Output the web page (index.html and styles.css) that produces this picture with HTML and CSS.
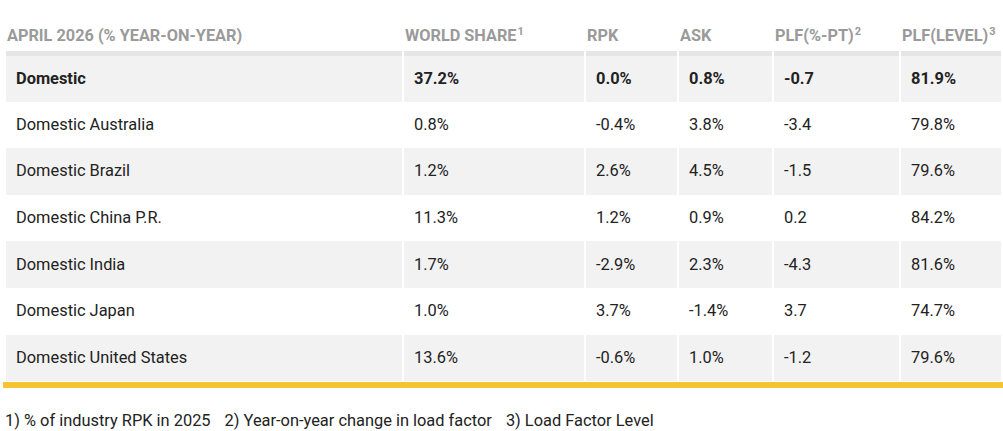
FILE: index.html
```html
<!DOCTYPE html>
<html lang="en">
<head>
<meta charset="utf-8">
<title>April 2026 domestic markets</title>
<link rel="stylesheet" href="styles.css">
</head>
<body>
<div class="panel">
  <table class="stats">
    <colgroup>
      <col class="c1"><col class="c2"><col class="c3"><col class="c4"><col class="c5"><col class="c6">
    </colgroup>
    <thead>
      <tr>
        <th>April 2026 (% year-on-year)</th>
        <th>World share<sup>1</sup></th>
        <th>RPK</th>
        <th>ASK</th>
        <th>PLF(%-pt)<sup>2</sup></th>
        <th>PLF(level)<sup>3</sup></th>
      </tr>
    </thead>
    <tbody>
      <tr class="total shade"><td>Domestic</td><td>37.2%</td><td>0.0%</td><td>0.8%</td><td>-0.7</td><td>81.9%</td></tr>
      <tr><td>Domestic Australia</td><td>0.8%</td><td>-0.4%</td><td>3.8%</td><td>-3.4</td><td>79.8%</td></tr>
      <tr class="shade"><td>Domestic Brazil</td><td>1.2%</td><td>2.6%</td><td>4.5%</td><td>-1.5</td><td>79.6%</td></tr>
      <tr><td>Domestic China P.R.</td><td>11.3%</td><td>1.2%</td><td>0.9%</td><td>0.2</td><td>84.2%</td></tr>
      <tr class="shade"><td>Domestic India</td><td>1.7%</td><td>-2.9%</td><td>2.3%</td><td>-4.3</td><td>81.6%</td></tr>
      <tr><td>Domestic Japan</td><td>1.0%</td><td>3.7%</td><td>-1.4%</td><td>3.7</td><td>74.7%</td></tr>
      <tr class="shade"><td>Domestic United States</td><td>13.6%</td><td>-0.6%</td><td>1.0%</td><td>-1.2</td><td>79.6%</td></tr>
    </tbody>
  </table>
  <div class="rule"></div>
</div>
<p class="notes">
  <span>1) % of industry RPK in 2025</span>
  <span>2) Year-on-year change in load factor</span>
  <span>3) Load Factor Level</span>
</p>
</body>
</html>
```
FILE: styles.css
```css
html, body {
  margin: 0;
  padding: 0;
  background: #ffffff;
}
body {
  font-family: Roboto, "Liberation Sans", Arial, sans-serif;
  color: #222222;
  width: 1003px;
}
.panel {
  margin-left: 3px;
}
.stats {
  margin-left: 1px;
  width: 999px;
  border-collapse: separate;
  border-spacing: 2px 0;
  table-layout: fixed;
}
.c1 { width: 396px; }
.c2 { width: 180px; }
.c3 { width: 91px; }
.c4 { width: 93px; }
.c5 { width: 125px; }
.c6 { width: 100px; }
.stats th {
  text-align: left;
  font-size: 16.3px;
  font-weight: 700;
  color: #9a9a9a;
  text-transform: uppercase;
  line-height: 20px;
  padding: 26px 0 5px 1px;
  border-bottom: 5px solid #e6e6e6;
  white-space: nowrap;
}
.stats th sup {
  font-size: 11px;
  line-height: 0;
  vertical-align: 6px;
  margin-left: 1px;
}
.stats td {
  font-size: 16.4px;
  height: 46.6px;
  padding: 0 0 0 10px;
  line-height: 20px;
  vertical-align: middle;
  white-space: nowrap;
}
.stats tr.shade td {
  background: #f2f2f2;
}
.stats tr.total td {
  font-weight: 700;
  height: 45.6px;
}
.rule {
  margin-top: 1px;
  height: 6px;
  background: #f5c432;
}
.notes {
  margin: 23px 0 0 5px;
  font-size: 16.4px;
  line-height: 20px;
  color: #222222;
  display: flex;
  gap: 14px;
}
```
